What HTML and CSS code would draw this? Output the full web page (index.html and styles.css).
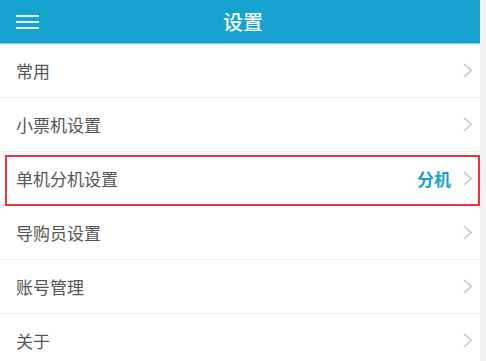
FILE: index.html
```html
<!DOCTYPE html>
<html lang="zh-CN">
<head>
    <meta charset="UTF-8">
    <meta name="viewport" content="width=device-width, initial-scale=1.0">
    <title>设置</title>
    <link rel="stylesheet" href="styles.css">
</head>
<body>
    <div class="screen">
        <header class="top-bar">
            <span class="menu-btn">
                <svg width="23" height="14" viewBox="0 0 23 14">
                    <rect x="0" y="0" width="23" height="2" fill="#e3f5fb"/>
                    <rect x="0" y="6" width="23" height="2" fill="#e3f5fb"/>
                    <rect x="0" y="12" width="23" height="2" fill="#e3f5fb"/>
                </svg>
            </span>
            <h1>设置</h1>
        </header>

        <ul class="settings">
            <li class="item"><span>常用</span><svg class="arrow" viewBox="0 0 9 15"><polyline points="1,1 8,7.5 1,14"/></svg></li>
            <li class="item"><span>小票机设置</span><svg class="arrow" viewBox="0 0 9 15"><polyline points="1,1 8,7.5 1,14"/></svg></li>
            <li class="item marked">
                <span>单机分机设置</span>
                <span class="right"><span class="value">分机</span><svg class="arrow" viewBox="0 0 9 15"><polyline points="1,1 8,7.5 1,14"/></svg></span>
            </li>
            <li class="item"><span>导购员设置</span><svg class="arrow" viewBox="0 0 9 15"><polyline points="1,1 8,7.5 1,14"/></svg></li>
            <li class="item"><span>账号管理</span><svg class="arrow" viewBox="0 0 9 15"><polyline points="1,1 8,7.5 1,14"/></svg></li>
            <li class="item"><span>关于</span><svg class="arrow" viewBox="0 0 9 15"><polyline points="1,1 8,7.5 1,14"/></svg></li>
        </ul>
    </div>
</body>
</html>
```

FILE: styles.css
```css
html, body {
    margin: 0;
    padding: 0;
}
body {
    font-family: "Noto Sans CJK SC", "Noto Sans", sans-serif;
    background-color: #f1f1f1;
    width: 486px;
    height: 361px;
    overflow: hidden;
}
.screen {
    width: 480px;
    background-color: #fff;
}
.top-bar {
    height: 43px;
    background-color: #16a3d0;
    border-bottom: 1px solid #7fcbe5;
    display: flex;
    align-items: center;
}
.menu-btn {
    display: flex;
    margin-left: 16px;
}
.top-bar h1 {
    flex: 1;
    margin: 0 0 0 -39px;
    padding-left: 6px;
    text-align: center;
    font-size: 20px;
    font-weight: 500;
    color: #fff;
}
.settings {
    list-style: none;
    margin: 0;
    padding: 0;
}
.item {
    height: 53px;
    border-bottom: 1px solid #ececec;
    display: flex;
    align-items: center;
    justify-content: space-between;
    padding: 0 8px 0 16px;
    font-size: 17px;
    color: #555;
    position: relative;
}
.arrow {
    width: 9px;
    height: 15px;
    fill: none;
    stroke: #c6c6c6;
    stroke-width: 1.6;
}
.right {
    display: flex;
    align-items: center;
    gap: 12px;
}
.value {
    color: #1a9fcf;
    font-weight: bold;
    font-size: 17px;
}
.marked::after {
    content: "";
    position: absolute;
    left: 5px;
    right: 0;
    top: 3px;
    bottom: -1px;
    border: 2px solid #e8343a;
}
```
